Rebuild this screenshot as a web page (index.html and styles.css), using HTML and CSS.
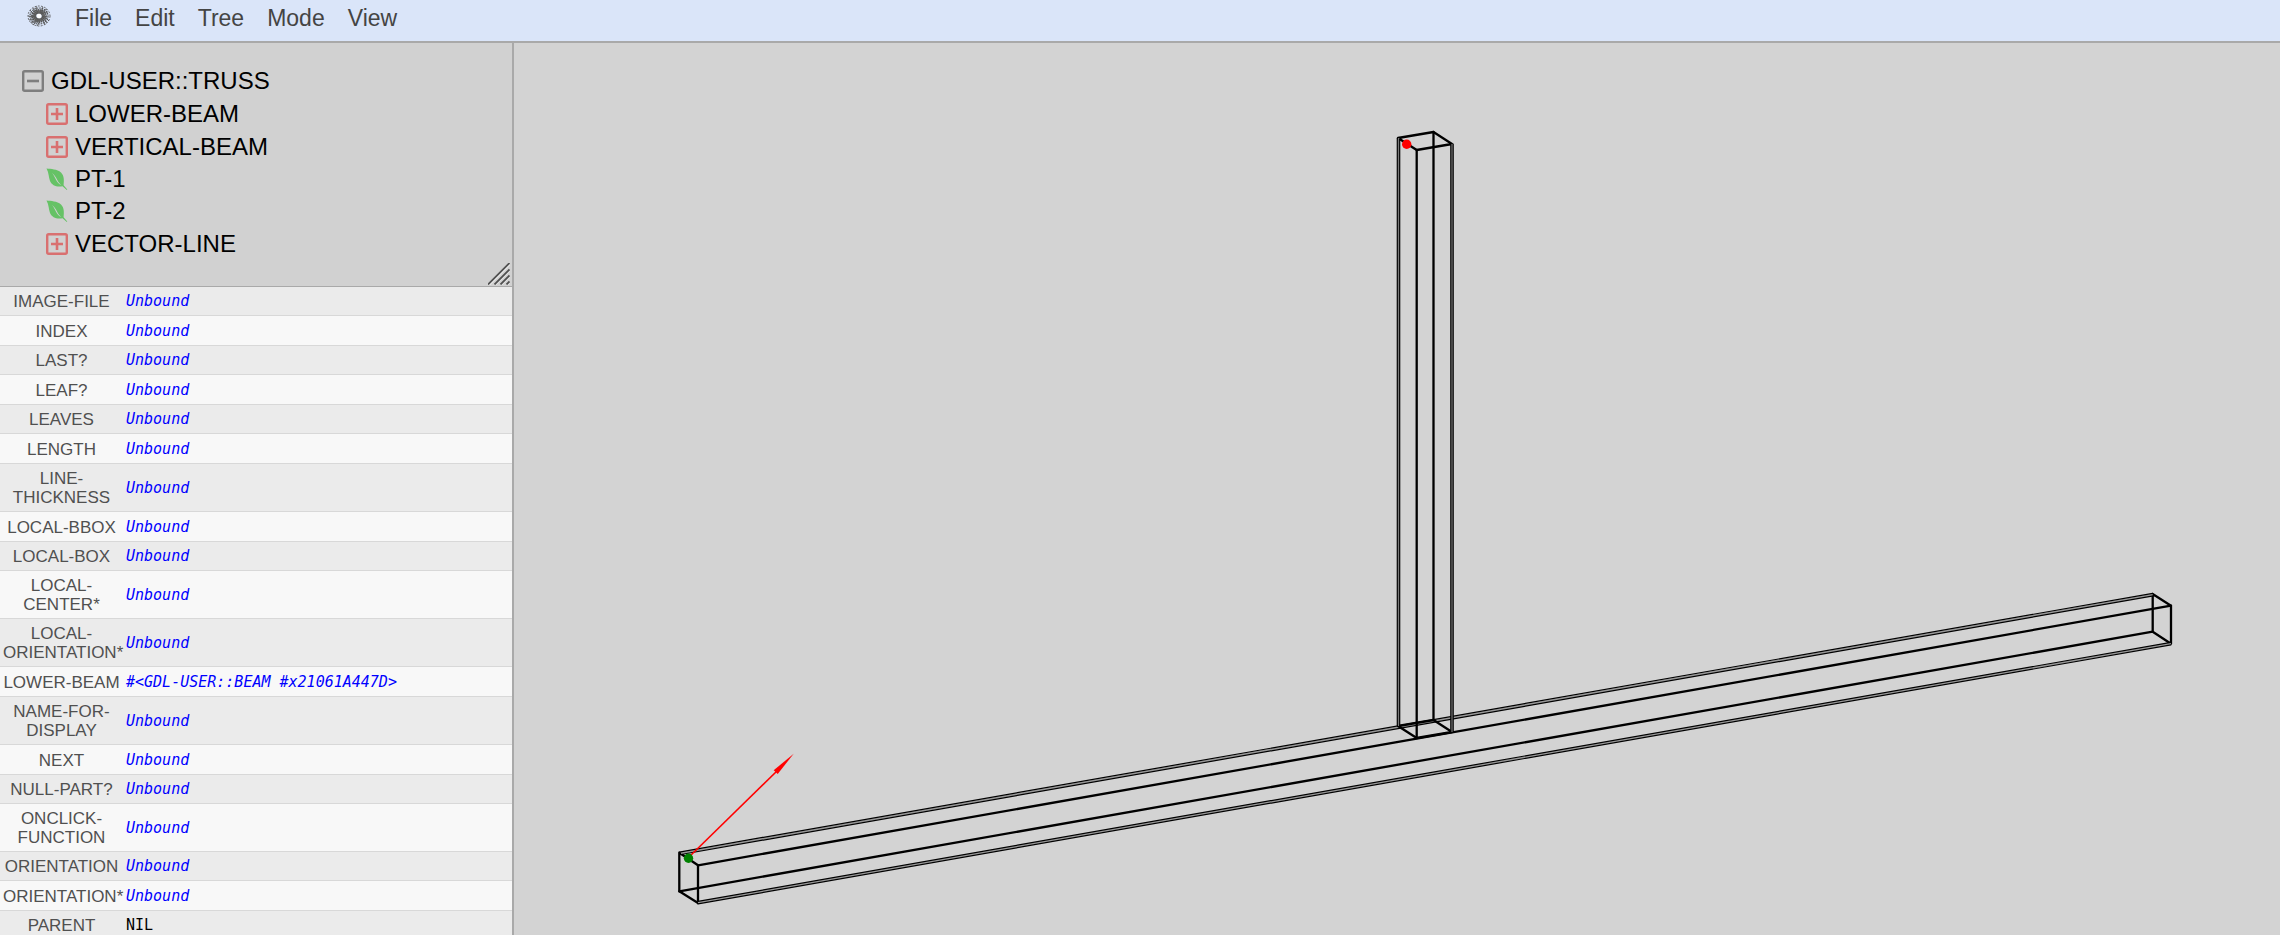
FILE: index.html
```html
<!DOCTYPE html>
<html lang="en">
<head>
<meta charset="utf-8">
<title>GDL-USER::TRUSS</title>
<link rel="stylesheet" href="styles.css">
</head>
<body>
<svg class="defs" aria-hidden="true">
  <symbol id="plus" viewBox="0 0 22 22">
    <rect x="1.2" y="1.2" width="19.6" height="19.6" rx="1.5" fill="none" stroke="#d97070" stroke-width="2.4"/>
    <path d="M5 11h12M11 5v12" stroke="#d97070" stroke-width="2.6"/>
  </symbol>
  <symbol id="minus" viewBox="0 0 22 22">
    <rect x="1.2" y="1.2" width="19.6" height="19.6" rx="1.5" fill="none" stroke="#7e7e7e" stroke-width="2.4"/>
    <path d="M5 11h12" stroke="#7e7e7e" stroke-width="2.6"/>
  </symbol>
  <symbol id="leaf" viewBox="0 0 22 22">
    <path d="M0.500 0.500C5 1 11 1 15 4.500C18.500 8 18 13 17.600 17.200L21.300 21.600L20.800 22L16.500 18.200C11 19.500 6 17.500 4 13C2.500 9 3 5 0.500 0.500Z" fill="#66c266"/>
    <path d="M6 5C8.500 7 10 9.300 11.300 12C12.500 14.500 14 16 15.500 17.200C12.800 16 11.300 14.500 10 11.800C8.800 9.200 7.800 7 6 5Z" fill="#d1d1d1"/>
  </symbol>
</svg>
<header class="menubar">
  <svg class="logo" viewBox="-12 -11 24 22" aria-hidden="true">
    <g fill="none" stroke="#555" stroke-width="0.9">
      <ellipse rx="11" ry="10" stroke-dasharray="1.8 1.4"/>
      <ellipse rx="9" ry="8" stroke-width="1.200" stroke-dasharray="1.600 .9"/>
      <ellipse rx="7" ry="6" stroke-width="1.800" stroke-dasharray="1.600 .6"/>
      <ellipse rx="4.500" ry="4" stroke-width="3.400" stroke="#666"/>
      <path d="M3 0Q7 1 10 5M2 2Q5 5 6 9M0 3Q1 7-2 10M-2 2Q-4 6-8 7M-3 0Q-7 1-11 0M-3-1Q-7-3-9-6M-1-3Q-3-6-3-10M1-3Q3-6 4-9M2-2Q7-4 9-4M3 1Q7 4 8 7M-1 3Q-3 7-6 9M-3 1Q-7 5-10 4M-2-2Q-5-5-6-8M2-3Q6-6 8-7"/>
    </g>
    <circle r="2.200" fill="#fff"/>
  </svg>
  <nav class="menus">
    <button type="button">File</button>
    <button type="button">Edit</button>
    <button type="button">Tree</button>
    <button type="button">Mode</button>
    <button type="button">View</button>
  </nav>
</header>
<main class="workspace">
  <aside class="sidebar">
    <section class="tree">
      <ul>
        <li>
          <button type="button"><svg><use href="#minus"/></svg>GDL-USER::TRUSS</button>
          <ul>
            <li><button type="button"><svg><use href="#plus"/></svg>LOWER-BEAM</button></li>
            <li><button type="button"><svg><use href="#plus"/></svg>VERTICAL-BEAM</button></li>
            <li><button type="button" class="leaf"><svg><use href="#leaf"/></svg>PT-1</button></li>
            <li><button type="button" class="leaf"><svg><use href="#leaf"/></svg>PT-2</button></li>
            <li><button type="button"><svg><use href="#plus"/></svg>VECTOR-LINE</button></li>
          </ul>
        </li>
      </ul>
      <svg class="grip" viewBox="0 0 22 22" aria-hidden="true">
        <path d="M1 21.500L21.500 1M7 21.500L21.500 7M13 21.500L21.500 13M19 21.500L21.500 19" stroke="#eee" stroke-width="2.500"/>
        <path d="M0 21.500L21.500 0M6.500 21.500L21.500 6.500M12.500 21.500L21.500 12.500M18.500 21.500L21.500 18.500" stroke="#505050" stroke-width="1.800"/>
      </svg>
    </section>
    <div class="inspector">
      <table>
        <tbody>
          <tr><th scope="row">IMAGE-FILE</th><td><a href="#">Unbound</a></td></tr>
          <tr><th scope="row">INDEX</th><td><a href="#">Unbound</a></td></tr>
          <tr><th scope="row">LAST?</th><td><a href="#">Unbound</a></td></tr>
          <tr><th scope="row">LEAF?</th><td><a href="#">Unbound</a></td></tr>
          <tr><th scope="row">LEAVES</th><td><a href="#">Unbound</a></td></tr>
          <tr><th scope="row">LENGTH</th><td><a href="#">Unbound</a></td></tr>
          <tr><th scope="row">LINE-<wbr>THICKNESS</th><td><a href="#">Unbound</a></td></tr>
          <tr><th scope="row">LOCAL-BBOX</th><td><a href="#">Unbound</a></td></tr>
          <tr><th scope="row">LOCAL-BOX</th><td><a href="#">Unbound</a></td></tr>
          <tr><th scope="row">LOCAL-<wbr>CENTER*</th><td><a href="#">Unbound</a></td></tr>
          <tr><th scope="row">LOCAL-<wbr>ORIENTATION*</th><td><a href="#">Unbound</a></td></tr>
          <tr><th scope="row">LOWER-BEAM</th><td><a href="#">#&lt;GDL-USER::BEAM #x21061A447D&gt;</a></td></tr>
          <tr><th scope="row">NAME-FOR-<wbr>DISPLAY</th><td><a href="#">Unbound</a></td></tr>
          <tr><th scope="row">NEXT</th><td><a href="#">Unbound</a></td></tr>
          <tr><th scope="row">NULL-PART?</th><td><a href="#">Unbound</a></td></tr>
          <tr><th scope="row">ONCLICK-<wbr>FUNCTION</th><td><a href="#">Unbound</a></td></tr>
          <tr><th scope="row">ORIENTATION</th><td><a href="#">Unbound</a></td></tr>
          <tr><th scope="row">ORIENTATION*</th><td><a href="#">Unbound</a></td></tr>
          <tr><th scope="row">PARENT</th><td>NIL</td></tr>
        </tbody>
      </table>
    </div>
  </aside>
  <section class="viewport">
    <svg viewBox="514 43 1766 892" role="img" aria-label="Truss wireframe">
      <g fill="none" stroke="#000" stroke-width="2.300" stroke-linecap="round" stroke-linejoin="round">
        <!-- lower beam -->
        <path d="M679.300 852.700L698 865.300V903L679.300 891.300Z"/>
        <path d="M2152.700 594L2171 605.700V643.700L2152.700 631.700Z"/>
        <path d="M698 865.300L2171 605.700M679.300 891.300L2152.700 631.700"/>
        <path stroke-width="2" stroke="#999" stroke-linecap="butt" d="M681 853.300L2152.700 594.800M698 902.500L2171 643.500"/>
        <path stroke-width="1.200" d="M679.300 852.100L2152.700 593.300M681 854.500L2154.700 595.600M698 901.400L2171 642.300M698 903.900L2171 644.800"/>
        <!-- vertical beam -->
        <path d="M1398 138L1433.500 132L1452 144L1416.700 150Z"/>
        <path d="M1398 726L1433.500 720L1452 732L1416.700 738Z"/>
        <path d="M1416.700 150V738M1433.500 132V720"/>
        <path stroke-width="2" stroke="#777" stroke-linecap="butt" d="M1398.500 138V726M1452 144V732"/>
        <path stroke-width="1.200" d="M1397.300 138V726M1399.700 139V726M1450.800 144V732M1453.200 144V732"/>
      </g>
      <path d="M688 858L778 770" stroke="#f00" stroke-width="1.600"/>
      <path d="M793.700 753.700L773.700 770.300L777.700 774Z" fill="#f00"/>
      <circle cx="688.500" cy="858.300" r="4.700" fill="#008000"/>
      <circle cx="1406.700" cy="144.200" r="4.700" fill="#f00"/>
    </svg>
  </section>
</main>
</body>
</html>
```

FILE: styles.css
```css
* { box-sizing: border-box; }
body {
  margin: 0;
  height: 100vh;
  display: flex;
  flex-direction: column;
  overflow: hidden;
  font-family: "Liberation Sans", Arial, sans-serif;
  background: #d3d3d3;
}
.defs { display: none; }
button {
  border: 0;
  padding: 0;
  background: none;
  font: inherit;
  color: inherit;
  cursor: pointer;
}
.menubar {
  flex: none;
  display: flex;
  align-items: flex-start;
  gap: 24px;
  padding: 5px 27px 10px;
  background: #dae5f9;
  border-bottom: 2px solid #a9a9a9;
}
.logo { width: 24px; height: 22px; }
.menus {
  display: flex;
  gap: 23px;
  font-size: 23px;
  line-height: 26px;
  color: #444;
}
.workspace {
  flex: 1;
  min-height: 0;
  display: flex;
}
.sidebar {
  flex: none;
  width: 514px;
  display: flex;
  flex-direction: column;
  border-right: 2px solid #a9a9a9;
}
.tree {
  position: relative;
  flex: none;
  padding: 21px 22px 26px;
  background: #d1d1d1;
  border-bottom: 1px solid #a9a9a9;
}
.tree ul {
  margin: 0;
  padding: 0;
  list-style: none;
}
.tree ul ul { padding-left: 24px; }
.tree button {
  display: flex;
  align-items: center;
  gap: 7px;
  height: 33px;
  font-size: 24px;
  line-height: 32px;
}
.tree .leaf { height: 32px; }
.tree button svg { width: 22px; height: 22px; }
.grip {
  position: absolute;
  right: 2px;
  bottom: 1px;
  width: 22px;
  height: 22px;
}
.inspector {
  flex: 1;
  min-height: 0;
  overflow: hidden;
}
table {
  width: 100%;
  border-spacing: 0;
  table-layout: fixed;
}
tr { background: #f8f8f8; height: 30px; }
tr:nth-child(odd) { background: #ebebeb; height: 29px; }
th, td {
  padding: 5px 3px 4px;
  border-bottom: 1px solid #d8d8d8;
  line-height: 19px;
  vertical-align: middle;
}
th {
  width: 123px;
  font-size: 17px;
  font-weight: 400;
  color: #505050;
  text-align: center;
  white-space: nowrap;
}
td {
  font-family: "DejaVu Sans Mono", monospace;
  font-size: 15px;
}
td a {
  color: #00f;
  font-style: italic;
  text-decoration: none;
}
.viewport { flex: 1; min-width: 0; }
.viewport svg { display: block; width: 100%; height: 100%; }
```
